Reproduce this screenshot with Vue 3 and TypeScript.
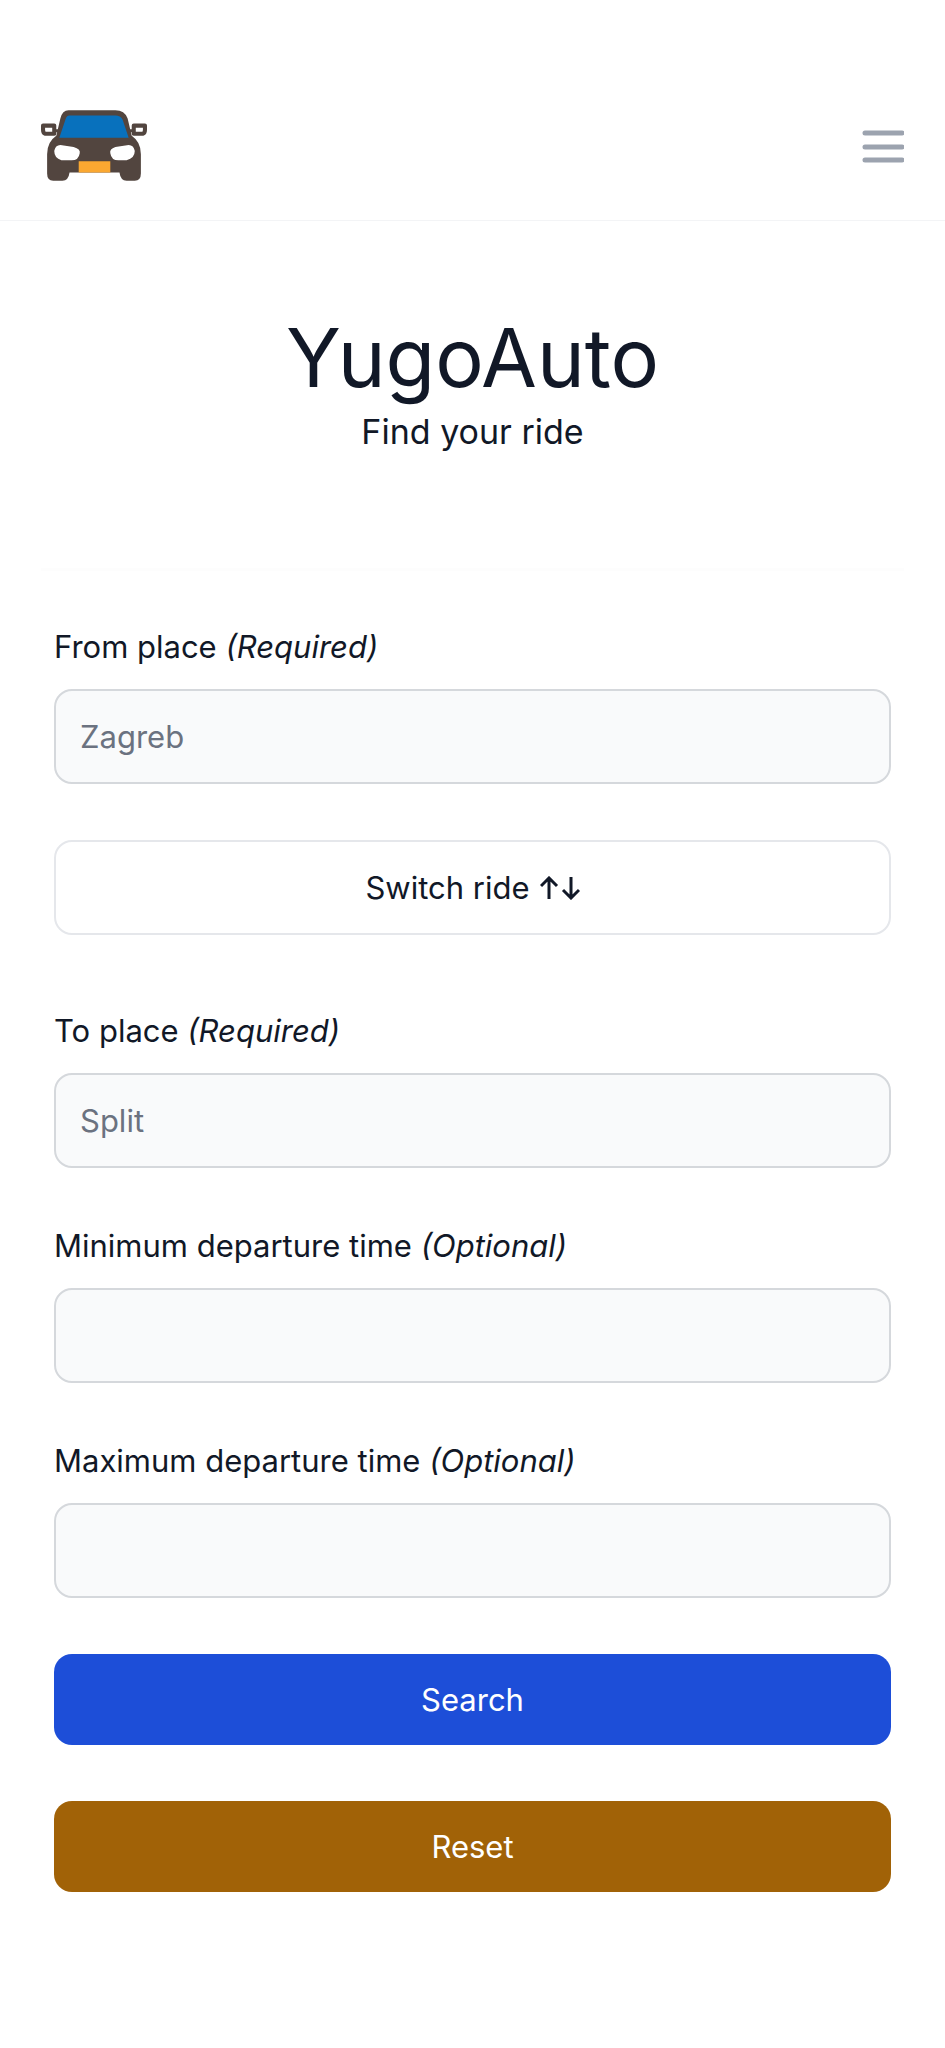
<script setup lang="ts">
import { ref } from 'vue'

const fromPlace = ref('')
const toPlace = ref('')
const minTime = ref('')
const maxTime = ref('')

function switchRide() {
  const previous = fromPlace.value
  fromPlace.value = toPlace.value
  toPlace.value = previous
}

function reset() {
  fromPlace.value = ''
  toPlace.value = ''
  minTime.value = ''
  maxTime.value = ''
}
</script>

<template>
  <div class="page">
    <header class="topbar">
      <a class="logo" href="#" aria-label="YugoAuto home">
        <svg viewBox="0 0 104 70" aria-hidden="true">
          <path
            fill="#52453f"
            d="M27 0H73Q82 0 85 8L89 25Q98 31 98 43V62Q98 69 92 69H84Q78 69 77 61H28Q27 69 21 69H12Q6 69 6 62V43Q6 31 15 25L19 8Q21 0 27 0Z"
          />
          <path fill="#0871bd" d="M28 5H73Q78 5 80 9L86 27H18L24 9Q25 5 28 5Z" />
          <path
            fill="#fff"
            d="M19 34L32 36Q39 38 38 42Q37 49 30 49H20Q13 47 13 40Q14 34 19 34ZM86 34L73 36Q67 38 68 42Q69 49 76 49H84Q92 47 92 40Q91 34 86 34Z"
          />
          <path fill="#fba831" d="M37 50H68V61H37Z" />
          <path
            fill="#fff"
            stroke="#52453f"
            stroke-width="4"
            stroke-linejoin="round"
            d="M2 15H13V23H4Q2 22 2 19ZM102 15H91V23H100Q102 22 102 19Z"
          />
          <path stroke="#52453f" stroke-width="3" d="M13 20H18M91 20H86" />
        </svg>
      </a>
      <button class="menu" type="button" aria-label="Open menu">
        <svg viewBox="0 0 42 42" aria-hidden="true">
          <path
            d="M3 8H40M3 22H40M3 35H40"
            fill="none"
            stroke="#9ca3af"
            stroke-width="5"
            stroke-linecap="round"
          />
        </svg>
      </button>
    </header>

    <main>
      <section class="hero">
        <h1>YugoAuto</h1>
        <p>Find your ride</p>
      </section>

      <form class="search" @submit.prevent>
        <div class="field">
          <label for="from">From place <em>(Required)</em></label>
          <input id="from" v-model="fromPlace" type="text" placeholder="Zagreb" />
        </div>
        <button class="switch" type="button" @click="switchRide">
          Switch ride
          <svg viewBox="0 0 40 24" aria-hidden="true">
            <path
              d="M9 23V2M1 10L9 2L17 10M31 1V22M23 14L31 22L39 14"
              fill="none"
              stroke="currentColor"
              stroke-width="3"
            />
          </svg>
        </button>
        <div class="field">
          <label for="to">To place <em>(Required)</em></label>
          <input id="to" v-model="toPlace" type="text" placeholder="Split" />
        </div>
        <div class="field">
          <label for="min">Minimum departure time <em>(Optional)</em></label>
          <input id="min" v-model="minTime" type="text" />
        </div>
        <div class="field">
          <label for="max">Maximum departure time <em>(Optional)</em></label>
          <input id="max" v-model="maxTime" type="text" />
        </div>
        <button class="action primary" type="submit">Search</button>
        <button class="action secondary" type="button" @click="reset">Reset</button>
      </form>
    </main>
  </div>
</template>

<style>
body {
  margin: 0;
  background: #fff;
}
</style>

<style scoped>
.page {
  box-sizing: border-box;
  min-height: 100vh;
  padding-top: 72px;
  background: #fff;
  color: #111827;
  font-family: Inter, "Liberation Sans", sans-serif;
  font-size: 31px;
  line-height: 44px;
}

.topbar {
  display: flex;
  align-items: center;
  justify-content: space-between;
  height: 148px;
  padding: 0 41px;
  border-bottom: 1px solid #f3f4f6;
}

.logo svg {
  display: block;
  width: 106px;
  height: 72px;
}

.menu {
  padding: 0;
  border: 0;
  background: none;
  cursor: pointer;
}

.menu svg {
  display: block;
  width: 42px;
  height: 42px;
}

main {
  padding: 0 41px;
}

.hero {
  padding: 91px 0 108px;
  border-bottom: 3px solid #fdfdfd;
  text-align: center;
}

h1 {
  margin: 0;
  font-size: 81px;
  font-weight: 400;
  line-height: 92px;
}

.hero p {
  margin: 0;
  font-size: 34px;
  line-height: 56px;
}

.search {
  display: flex;
  flex-direction: column;
  gap: 56px;
  padding: 54px 13px;
}

.field {
  display: flex;
  flex-direction: column;
  gap: 20px;
}

input,
button {
  box-sizing: border-box;
  color: inherit;
  font: inherit;
}

input {
  width: 100%;
  height: 95px;
  padding: 0 24px;
  border: 2px solid #d5d8dc;
  border-radius: 18px;
  background: #f9fafb;
}

input::placeholder {
  color: #6b7280;
  opacity: 1;
}

.switch {
  display: flex;
  align-items: center;
  justify-content: center;
  gap: 10px;
  height: 95px;
  margin-bottom: 18px;
  border: 2px solid #e5e7eb;
  border-radius: 18px;
  background: #fff;
}

.switch svg {
  width: 40px;
  height: 24px;
}

.action {
  height: 91px;
  border: 0;
  border-radius: 18px;
  color: #fff;
}

.primary {
  background: #1d4ed8;
}

.secondary {
  background: #a16207;
}
</style>
